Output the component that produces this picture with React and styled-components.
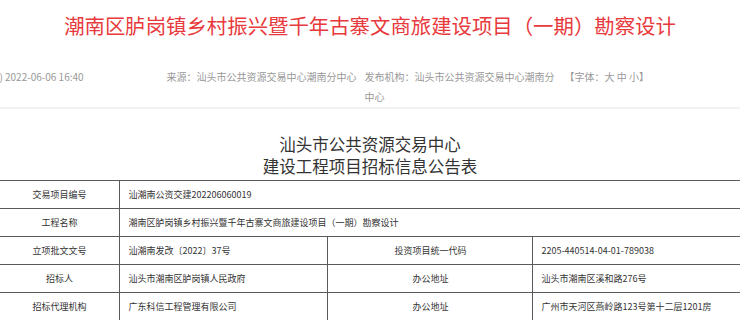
import React from 'react';
import styled, { createGlobalStyle } from 'styled-components';

const GlobalStyle = createGlobalStyle`
  html, body {
    margin: 0;
    padding: 0;
    background: #fff;
    overflow: hidden;
  }
  body {
    font-family: "Noto Sans CJK SC", "Noto Sans", sans-serif;
  }
`;

const Page = styled.div`
  width: 1000px;
  margin-left: -130px;
  padding-top: 9px;
`;

const Title = styled.h1`
  margin: 0;
  font-size: 20.4px;
  line-height: 32px;
  font-weight: 400;
  color: #e8393c;
  text-align: center;
`;

const Meta = styled.div`
  display: flex;
  align-items: flex-start;
  margin-top: 26px;
  padding-left: 86px;
  font-size: 10px;
  line-height: 20px;
  color: #999;
`;

const MetaItem = styled.span`
  display: inline-block;
  margin-right: ${({ gap }) => gap || 8}px;
  max-width: ${({ max }) => (max ? `${max}px` : 'none')};
  white-space: ${({ max }) => (max ? 'normal' : 'nowrap')};
`;

const Divider = styled.div`
  height: 2px;
  background: #f2f2f2;
`;

const SubTitle = styled.h2`
  margin: 24px 0 3px;
  font-size: 16.5px;
  line-height: 22px;
  font-weight: 400;
  color: #333;
  text-align: center;
`;

const Table = styled.table`
  width: 742px;
  margin: 0 auto;
  border-collapse: collapse;
  table-layout: fixed;
  font-size: 9px;
  color: #333;
`;

const Cell = styled.td`
  height: 27px;
  padding: 0 ${({ label }) => (label ? 0 : 8)}px;
  border: 1px solid #5a5a5a;
  text-align: ${({ label }) => (label ? 'center' : 'left')};
  white-space: nowrap;
`;

const rows = [
  { label: '交易项目编号', value: '汕潮南公资交建202206060019' },
  { label: '工程名称', value: '潮南区胪岗镇乡村振兴暨千年古寨文商旅建设项目（一期）勘察设计' },
  { label: '立项批文文号', value: '汕潮南发改〔2022〕37号', label2: '投资项目统一代码', value2: '2205-440514-04-01-789038' },
  { label: '招标人', value: '汕头市潮南区胪岗镇人民政府', label2: '办公地址', value2: '汕头市潮南区溪和路276号' },
  { label: '招标代理机构', value: '广东科信工程管理有限公司', label2: '办公地址', value2: '广州市天河区燕岭路123号第十二层1201房' },
];

export default function App() {
  return (
    <Page>
      <GlobalStyle />
      <Title>潮南区胪岗镇乡村振兴暨千年古寨文商旅建设项目（一期）勘察设计</Title>
      <Meta>
        <MetaItem gap={83}>(发布时间) 2022-06-06 16:40</MetaItem>
        <MetaItem>来源：汕头市公共资源交易中心潮南分中心</MetaItem>
        <MetaItem max={192}>发布机构：汕头市公共资源交易中心潮南分中心</MetaItem>
        <MetaItem>【字体：大 中 小】</MetaItem>
      </Meta>
      <Divider />
      <SubTitle>
        汕头市公共资源交易中心
        <br />
        建设工程项目招标信息公告表
      </SubTitle>
      <Table>
        <colgroup>
          <col style={{ width: 121 }} />
          <col style={{ width: 208 }} />
          <col style={{ width: 205 }} />
          <col style={{ width: 208 }} />
        </colgroup>
        <tbody>
          {rows.map((r) => (
            <tr key={r.label + r.value}>
              <Cell label>{r.label}</Cell>
              {r.label2 ? (
                <>
                  <Cell>{r.value}</Cell>
                  <Cell label>{r.label2}</Cell>
                  <Cell>{r.value2}</Cell>
                </>
              ) : (
                <Cell colSpan={3}>{r.value}</Cell>
              )}
            </tr>
          ))}
        </tbody>
      </Table>
    </Page>
  );
}
